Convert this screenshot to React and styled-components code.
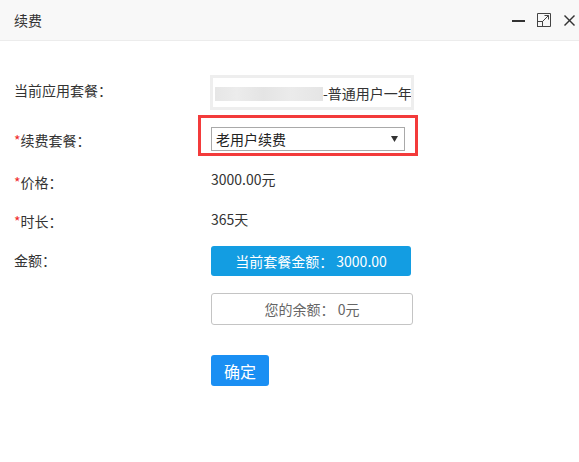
import React from "react";
import styled, { createGlobalStyle } from "styled-components";

const Global = createGlobalStyle`
  html, body { margin: 0; padding: 0; background: #fff; }
  body { font-family: "Noto Sans CJK SC", "Noto Sans", sans-serif; color: #333; }
  * { box-sizing: border-box; }
`;

const Dialog = styled.div`
  width: 579px;
  height: 462px;
  background: #fff;
  overflow: hidden;
`;

const Header = styled.div`
  height: 41px;
  background: #f8f8f8;
  border-bottom: 1px solid #ececec;
  display: flex;
  align-items: center;
  padding: 0 4px 0 14px;
`;

const Title = styled.div`
  font-size: 14px;
  line-height: 20px;
  color: #333;
`;

const IconBar = styled.div`
  margin-left: auto;
  display: flex;
  align-items: center;
  gap: 12px;
`;

const IconBox = styled.span`
  display: flex;
  width: ${(p) => p.$w}px;
  height: 14px;
  align-items: center;
  justify-content: center;
`;

const Body = styled.div`
  padding: 34px 0 0 14px;
  display: flex;
  flex-direction: column;
`;

const Row = styled.div`
  display: grid;
  grid-template-columns: 197px auto;
  align-items: center;
  margin-top: ${(p) => p.$gap || 0}px;
  height: ${(p) => p.$h}px;
`;

const Label = styled.div`
  font-size: 14px;
  line-height: 20px;
  color: #333;
  margin-top: ${(p) => p.$drop || 0}px;
`;

const Star = styled.span`
  color: #f02b2b;
`;

const InfoBox = styled.div`
  width: 204px;
  height: 35px;
  margin-left: -1px;
  border: 3px solid #eeeeee;
  display: flex;
  align-items: center;
  padding-left: 2px;
  overflow: hidden;
  white-space: nowrap;
  font-size: 14px;
  color: #333;
`;

const Blurred = styled.span`
  flex: none;
  width: 108px;
  height: 14px;
  margin-top: 2px;
  background: linear-gradient(90deg, #e6e6e6 0%, #ececec 20%, #e4e4e4 45%, #ebebeb 70%, #e5e5e5 100%);
  filter: blur(0.6px);
`;

const InfoText = styled.span`
  line-height: 20px;
  margin-top: 1px;
`;

const SelectWrap = styled.div`
  position: relative;
  width: 194px;
  height: 24px;
  &::before {
    content: "";
    position: absolute;
    top: -12px;
    left: -13px;
    right: -13px;
    bottom: -5px;
    border: 3px solid #f33b3b;
    pointer-events: none;
  }
`;

const Select = styled.div`
  width: 100%;
  height: 100%;
  border: 1px solid #a9a9a9;
  background: #fff;
  display: flex;
  align-items: center;
  padding: 0 6px 0 4px;
  font-size: 14px;
  color: #222;
`;

const Arrow = styled.svg`
  margin-left: auto;
  flex: none;
`;

const Value = styled.div`
  font-size: 14px;
  line-height: 20px;
  color: #333;
`;

const AmountButton = styled.div`
  width: 200px;
  height: 30px;
  background: #139de2;
  border-radius: 3px;
  color: #fff;
  font-size: 14px;
  display: flex;
  align-items: center;
  justify-content: center;
  white-space: pre;
`;

const BalanceBox = styled.div`
  width: 202px;
  height: 32px;
  border: 1px solid #c4c4c4;
  border-radius: 3px;
  color: #666;
  font-size: 14px;
  display: flex;
  align-items: center;
  justify-content: center;
  white-space: pre;
`;

const ConfirmButton = styled.button`
  width: 58px;
  height: 31px;
  border: none;
  border-radius: 3px;
  background: #1a8ff3;
  color: #fff;
  font-family: inherit;
  font-size: 16px;
  padding: 0;
  cursor: pointer;
`;

const MinIcon = () => (
  <svg width="13" height="14" viewBox="0 0 13 14">
    <line x1="0" y1="8" x2="13" y2="8" stroke="#333" strokeWidth="2" />
  </svg>
);

const MaxIcon = () => (
  <svg width="15" height="14" viewBox="0 0 15 14" fill="none" stroke="#444" strokeWidth="1">
    <path d="M5.5 13.5H13.5V0.5H0.5V8.5" />
    <rect x="0.5" y="8.5" width="5" height="5" />
    <path d="M5.5 8.5L11.5 2.5M7.5 2.5H11.5V6.5" />
  </svg>
);

const CloseIcon = () => (
  <svg width="11" height="11" viewBox="0 0 11 11" stroke="#333" strokeWidth="1.4">
    <line x1="0.5" y1="0.5" x2="10.5" y2="10.5" />
    <line x1="10.5" y1="0.5" x2="0.5" y2="10.5" />
  </svg>
);

export default function App() {
  return (
    <>
      <Global />
      <Dialog>
        <Header>
          <Title>续费</Title>
          <IconBar>
            <IconBox $w={13}><MinIcon /></IconBox>
            <IconBox $w={15}><MaxIcon /></IconBox>
            <IconBox $w={11}><CloseIcon /></IconBox>
          </IconBar>
        </Header>
        <Body>
          <Row $h={35}>
            <Label $drop={-5}>当前应用套餐：</Label>
            <InfoBox>
              <Blurred />
              <InfoText>-普通用户一年</InfoText>
            </InfoBox>
          </Row>
          <Row $gap={17} $h={24}>
            <Label $drop={1}><Star>*</Star>续费套餐：</Label>
            <SelectWrap>
              <Select>
                老用户续费
                <Arrow width="7" height="6" viewBox="0 0 7 6">
                  <path d="M0 0H7L3.5 6Z" fill="#333" />
                </Arrow>
              </Select>
            </SelectWrap>
          </Row>
          <Row $gap={15} $h={20}>
            <Label $drop={6}><Star>*</Star>价格：</Label>
            <Value>3000.00元</Value>
          </Row>
          <Row $gap={20} $h={20}>
            <Label $drop={5}><Star>*</Star>时长：</Label>
            <Value>365天</Value>
          </Row>
          <Row $gap={20} $h={30}>
            <Label $drop={-2}>金额：</Label>
            <AmountButton>当前套餐金额： 3000.00</AmountButton>
          </Row>
          <Row $gap={17} $h={32}>
            <Label />
            <BalanceBox>您的余额： 0元</BalanceBox>
          </Row>
          <Row $gap={30} $h={31}>
            <Label />
            <div>
              <ConfirmButton>确定</ConfirmButton>
            </div>
          </Row>
        </Body>
      </Dialog>
    </>
  );
}
